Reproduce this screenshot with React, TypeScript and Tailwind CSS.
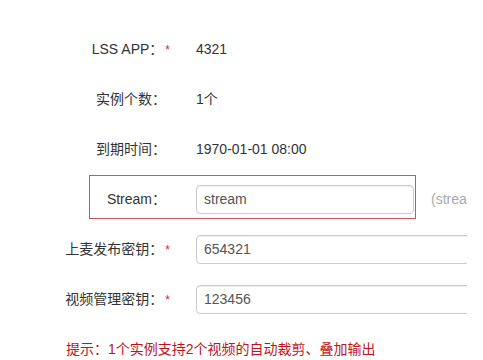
import React from "react";

const font = {
  fontFamily: '"Liberation Sans", "Noto Sans CJK SC", sans-serif',
};

function Label({ text, star }: { text: string; star?: boolean }) {
  return (
    <div className="w-[170px] shrink-0 text-right text-[14px] text-[#333] whitespace-nowrap">
      {text}
      {star ? <span className="ml-[2px] text-[#c9302c] text-[12px]">*</span> : <span className="inline-block w-[4px]" />}
    </div>
  );
}

function Field({ value, width }: { value: string; width: string }) {
  return (
    <div
      className={`${width} h-[29px] shrink-0 border border-[#ccc] rounded-[4px] shadow-[inset_0_1px_1px_rgba(0,0,0,0.075)] flex items-center px-[7px] text-[14px] text-[#555]`}
    >
      {value}
    </div>
  );
}

export default function App() {
  return (
    <div className="w-[483px] h-[360px] overflow-hidden bg-white pt-[24px]" style={font}>
      <div className="w-[467px] overflow-hidden">
        <div className="flex items-center h-[50px]">
          <Label text="LSS APP：" star />
          <div className="ml-[26px] text-[14px] text-[#333]">4321</div>
        </div>
        <div className="flex items-center h-[50px]">
          <Label text="实例个数：" />
          <div className="ml-[26px] text-[14px] text-[#333]">1个</div>
        </div>
        <div className="flex items-center h-[50px]">
          <Label text="到期时间：" />
          <div className="ml-[26px] text-[14px] text-[#333]">1970-01-01 08:00</div>
        </div>
        <div className="relative flex items-center h-[50px] whitespace-nowrap">
          <Label text="Stream：" />
          <div className="ml-[26px]">
            <Field value="stream" width="w-[218px]" />
          </div>
          <div className="ml-[17px] text-[14px] text-[#aaa]">(stream)</div>
          <div className="absolute left-[89px] top-[1px] w-[327px] h-[44px] border border-[#c8555a] pointer-events-none" />
        </div>
        <div className="flex items-center h-[50px] whitespace-nowrap">
          <Label text="上麦发布密钥：" star />
          <div className="ml-[26px]">
            <Field value="654321" width="w-[290px]" />
          </div>
        </div>
        <div className="flex items-center h-[50px] whitespace-nowrap">
          <Label text="视频管理密钥：" star />
          <div className="ml-[26px]">
            <Field value="123456" width="w-[290px]" />
          </div>
        </div>
      </div>
      <div className="flex items-center h-[50px] pl-[66px] text-[14px] text-[#c0141c] whitespace-nowrap">
        提示：1个实例支持2个视频的自动裁剪、叠加输出
      </div>
    </div>
  );
}
